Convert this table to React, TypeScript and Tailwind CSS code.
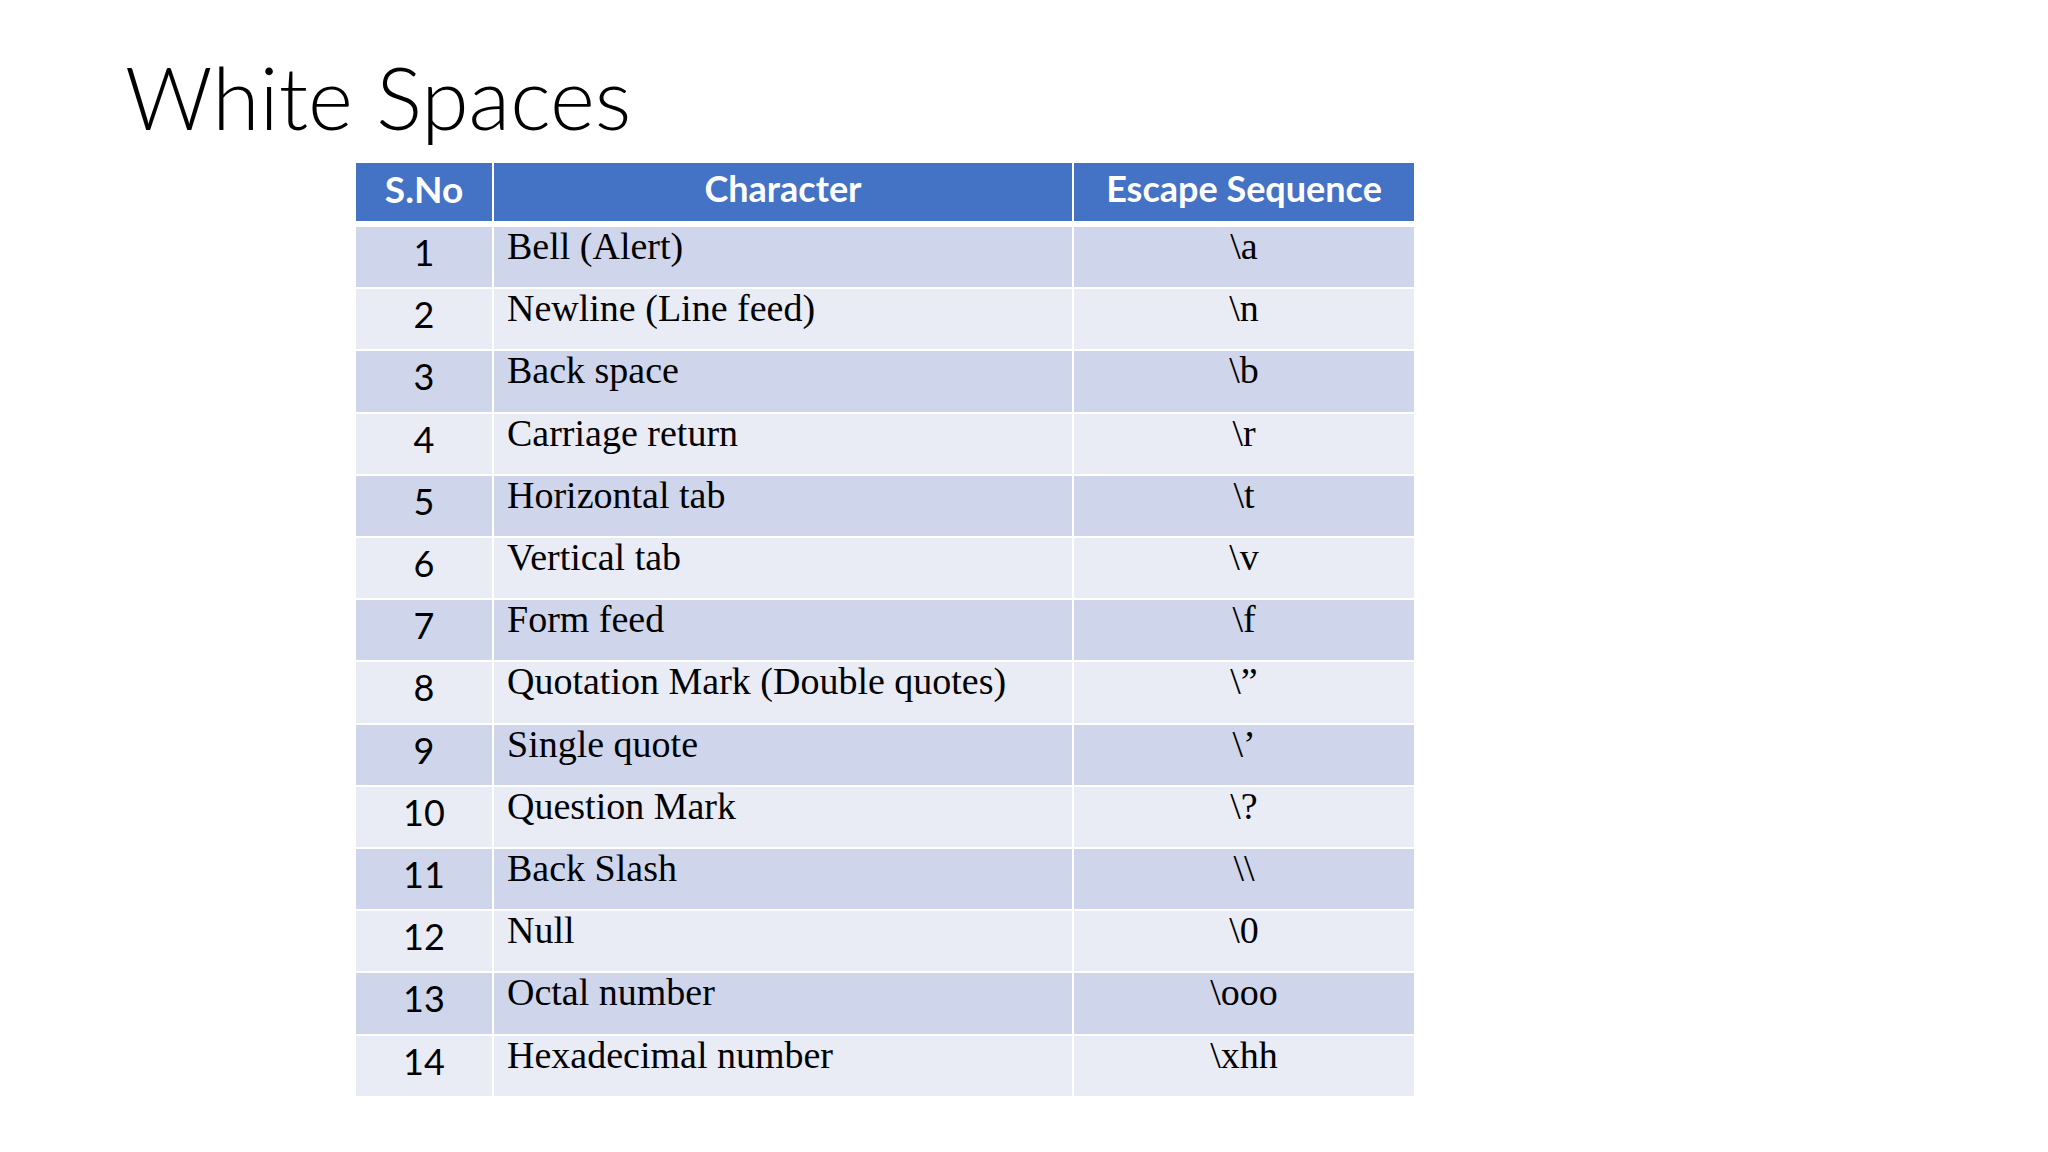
import React from "react";

const rows: [string, string][] = [
  ["Bell (Alert)", "\\a"],
  ["Newline (Line feed)", "\\n"],
  ["Back space", "\\b"],
  ["Carriage return", "\\r"],
  ["Horizontal tab", "\\t"],
  ["Vertical tab", "\\v"],
  ["Form feed", "\\f"],
  ["Quotation Mark (Double quotes)", "\\\u201D"],
  ["Single quote", "\\\u2019"],
  ["Question Mark", "\\?"],
  ["Back Slash", "\\\\"],
  ["Null", "\\0"],
  ["Octal number", "\\ooo"],
  ["Hexadecimal number", "\\xhh"],
];

const sans = { fontFamily: "Lato, 'Open Sans', sans-serif" };
const serif = { fontFamily: "'Liberation Serif', 'Times New Roman', serif" };

export default function App() {
  return (
    <div className="w-[2048px] h-[1152px] bg-white overflow-hidden">
      <div className="pt-[54px] pl-[125px]">
        <h1
          className="text-[86px] leading-none font-light text-black"
          style={sans}
        >
          White Spaces
        </h1>
      </div>
      <div className="mt-[23px] ml-[356px] w-[1058px] flex flex-col">
        <div
          className="grid grid-cols-[136px_578px_340px] gap-x-[2px] h-[58px] bg-white"
          style={sans}
        >
          <div className="bg-[#4472c4] text-white font-bold text-[37px] leading-none text-center pt-[7px]">
            S.No
          </div>
          <div className="bg-[#4472c4] text-white font-bold text-[36px] leading-none text-center pt-[7px]">
            Character
          </div>
          <div className="bg-[#4472c4] text-white font-bold text-[36px] leading-none text-center pt-[7px]">
            Escape Sequence
          </div>
        </div>
        <div className="h-[6px]" />
        <div className="flex flex-col gap-y-[2px]">
          {rows.map(([name, esc], i) => {
            const bg = i % 2 === 0 ? "bg-[#cfd5ea]" : "bg-[#e9ebf5]";
            return (
              <div
                key={i}
                className={`grid grid-cols-[136px_578px_340px] gap-x-[2px] ${i % 5 === 2 ? "h-[61px]" : "h-[60px]"}`}
              >
                <div
                  className={`${bg} text-black text-[36px] leading-none text-center pt-[7px]`}
                  style={sans}
                >
                  {i + 1}
                </div>
                <div
                  className={`${bg} text-black text-[38px] leading-none pl-[13px] pt-0`}
                  style={serif}
                >
                  {name}
                </div>
                <div
                  className={`${bg} text-black text-[38px] leading-none text-center pt-0`}
                  style={serif}
                >
                  {esc}
                </div>
              </div>
            );
          })}
        </div>
      </div>
    </div>
  );
}
